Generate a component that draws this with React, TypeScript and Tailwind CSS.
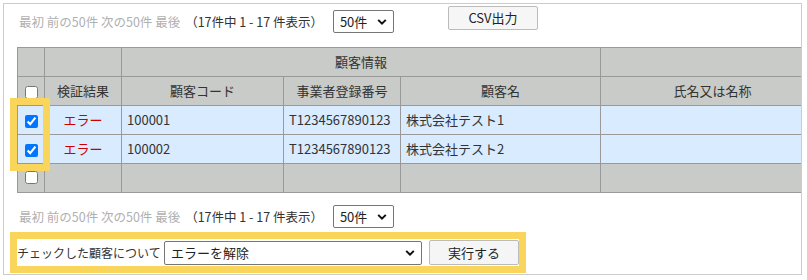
import React from "react";

const font = { fontFamily: '"Noto Sans CJK JP", "Noto Sans", sans-serif' };

const rows = [
  { code: "100001", reg: "T1234567890123", name: "株式会社テスト1" },
  { code: "100002", reg: "T1234567890123", name: "株式会社テスト2" },
];

function Chevron() {
  return (
    <svg width="10" height="7" viewBox="0 0 10 7" className="absolute right-[7px] top-1/2 -translate-y-1/2 pointer-events-none">
      <path d="M1.2 1.4 L5 5.2 L8.8 1.4" fill="none" stroke="#111" strokeWidth="2" />
    </svg>
  );
}

function Select({ value, className }: { value: string; className: string }) {
  return (
    <div className={`relative h-[23px] ${className}`}>
      <div className="h-full w-full border border-[#767676] rounded-[2px] bg-white pl-[6px] text-[13px] leading-[21px] text-[#222]">
        {value}
      </div>
      <Chevron />
    </div>
  );
}

function Pager() {
  return (
    <div className="flex items-start">
      <span className="ml-[2px] h-[23px] leading-[23px] text-[12.5px] text-[#b0b0b0] whitespace-nowrap">
        最初 前の50件 次の50件 最後
      </span>
      <span className="ml-[5px] h-[23px] leading-[23px] text-[12.5px] text-[#333] whitespace-nowrap">
        （17件中 1 - 17 件表示）
      </span>
      <Select value="50件" className="ml-[10px] w-[61px]" />
    </div>
  );
}

const th = "border border-[#999] bg-[#c8cbc8] font-normal text-[#333] text-center px-[5px]";
const td = "border border-[#999] px-[5px] text-[#333]";

export default function App() {
  return (
    <div className="bg-white w-[807px] h-[280px] pt-[3px] pl-[3px]" style={font}>
      <div className="relative w-[799px] h-[272px] border border-[#cccccc] overflow-hidden bg-white">
        {/* top controls */}
        <div className="flex items-start h-[43px] pl-[13px]">
          <div className="mt-[6px] w-[431px]">
            <Pager />
          </div>
          <button className="mt-[2px] w-[90px] h-[24px] border border-[#bbbbbb] rounded-[2px] bg-[#f5f6f5] text-[13px] text-[#222]">
            CSV出力
          </button>
        </div>

        {/* table */}
        <div className="pl-[13px]">
          <table className="border-collapse table-fixed w-[807px] text-[13px]">
            <colgroup>
              <col className="w-[27px]" />
              <col className="w-[77px]" />
              <col className="w-[162px]" />
              <col className="w-[117px]" />
              <col className="w-[200px]" />
              <col className="w-[224px]" />
            </colgroup>
            <thead>
              <tr className="h-[29px]">
                <th className={th}></th>
                <th className={th}></th>
                <th className={th} colSpan={3}>顧客情報</th>
                <th className={th}></th>
              </tr>
              <tr className="h-[29px]">
                <th className={`${th} px-0`}>
                  <input type="checkbox" className="align-middle m-0 w-[13px] h-[13px]" readOnly />
                </th>
                <th className={th}>検証結果</th>
                <th className={th}>顧客コード</th>
                <th className={th}>事業者登録番号</th>
                <th className={th}>顧客名</th>
                <th className={th}>氏名又は名称</th>
              </tr>
            </thead>
            <tbody>
              {rows.map((r) => (
                <tr key={r.code} className="h-[29px] bg-[#d8ebff]">
                  <td className={`${td} px-0 text-center`}>
                    <input type="checkbox" defaultChecked className="align-middle m-0 w-[13px] h-[13px]" />
                  </td>
                  <td className={`${td} text-center text-[#cc0000]`}>エラー</td>
                  <td className={td}>{r.code}</td>
                  <td className={td}>{r.reg}</td>
                  <td className={td}>{r.name}</td>
                  <td className={td}></td>
                </tr>
              ))}
              <tr className="h-[29px] bg-[#c8cbc8]">
                <td className={`${td} px-0 text-center align-top pt-[7px]`}>
                  <input type="checkbox" className="align-top m-0 w-[13px] h-[13px]" readOnly />
                </td>
                <td className={td}></td>
                <td className={td}></td>
                <td className={td}></td>
                <td className={td}></td>
                <td className={td}></td>
              </tr>
            </tbody>
          </table>
        </div>

        {/* bottom pager */}
        <div className="h-[39px] pl-[13px] pt-[12px]">
          <Pager />
        </div>

        {/* bulk action */}
        <div className="ml-[6px] w-[516px] border-[7px] border-[#f9d55b]">
          <div className="flex items-center h-[27px] text-[13px] text-[#333]">
            <span className="w-[147px] text-[12px] whitespace-nowrap">チェックした顧客について</span>
            <Select value="エラーを解除" className="w-[258px] h-[24px]" />
            <button className="ml-[7px] w-[90px] h-[25px] border border-[#bbbbbb] rounded-[2px] bg-[#f4f5f4] text-[13px] text-[#222]">
              実行する
            </button>
          </div>
        </div>

        {/* highlight around checked rows */}
        <div className="absolute left-[6px] top-[94px] w-[40px] h-[73px] border-[7px] border-[#f9d55b] pointer-events-none" />
      </div>
    </div>
  );
}
